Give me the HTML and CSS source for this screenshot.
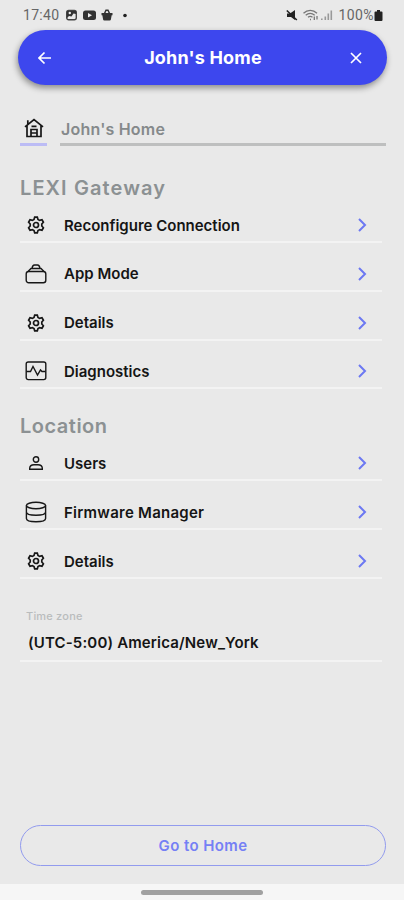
FILE: index.html
```html
<!DOCTYPE html>
<html lang="en">
<head>
    <meta charset="UTF-8">
    <meta name="viewport" content="width=device-width, initial-scale=1">
    <title>John's Home</title>
    <link rel="stylesheet" href="styles.css">
</head>
<body>
    <!-- shared icons -->
    <svg class="defs" width="0" height="0">
        <symbol id="gear" viewBox="0 0 18 18">
            <path d="M7.700 1.200h2.600l.7 2.300 1.600.9 2.400-.6 1.400 2.400L14.800 8v2l1.600 1.800-1.400 2.400-2.400-.6-1.600.9-.7 2.300H7.700L7 14.500l-1.600-.9-2.400.6-1.400-2.400L3.200 10V8L1.600 6.200 3 3.800l2.400.6L7 3.500z"/>
            <circle cx="9" cy="9" r="2.500"/>
        </symbol>
        <symbol id="chevron" viewBox="0 0 10 14">
            <path d="M2 1l6 6-6 6"/>
        </symbol>
    </svg>

    <div class="screen">
        <div class="status-bar">
            <span class="clock">17:40</span>
            <svg class="status-left" width="64" height="14" viewBox="0 0 64 14">
                <rect x="1.700" y="2.500" width="9.600" height="9.300" rx="2" fill="none" stroke="#444" stroke-width="1.400"/>
                <path d="M2 3h9v3L8.500 5.500l-2 3L4 8 2 10z" fill="#333"/>
                <circle cx="4.800" cy="5" r="1.200" fill="#eee"/>
                <rect x="18" y="2.500" width="13" height="9.500" rx="2.500" fill="#333"/>
                <path d="M23 5v4.500l4-2.250z" fill="#eee"/>
                <path d="M36.500 5h11v2.200h-11zM37.300 7h9.400l-.8 4.500q-.2 1-1.200 1h-5.400q-1 0-1.200-1z" fill="#333"/>
                <path d="M39.500 5.500L41 2.300h2l1.500 3.200" fill="none" stroke="#333" stroke-width="1.500"/>
                <circle cx="60" cy="7.500" r="1.800" fill="#222"/>
            </svg>
            <svg class="status-right" width="50" height="14" viewBox="0 0 50 14">
                <path d="M1 5.500h3L9 2v10L5 9H1z" fill="#222"/>
                <path d="M.8 2.500l10 9.500" stroke="#222" stroke-width="1.600"/>
                <g fill="none" stroke="#777" stroke-width="1.300">
                    <path d="M17.500 5.300c4-4 9.500-4 13.500 0M19.700 7.300c3-2.600 6-2.600 9 0M22 9.300c1.500-1.200 3-1.200 4.500 0M24 11.500h1"/>
                    <path d="M28.300 8.500v3.500M31 8v3.500"/>
                </g>
                <path d="M35 10.500h1.600V12H35zM38.500 8.500h1.600V12h-1.600zM41.500 5.500h1.600V12h-1.600zM44.500 2.500h1.600V12h-1.600z" fill="#999"/>
            </svg>
            <span class="percent">100%</span>
            <svg class="battery" width="9" height="13" viewBox="0 0 9 13">
                <path d="M3 1h3v1.500h1.500q1 0 1 1V11q0 1-1 1h-6q-1 0-1-1V3.500q0-1 1-1H3z" fill="#222"/>
            </svg>
        </div>

        <header class="header">
            <svg class="header-icon" width="14" height="14" viewBox="0 0 14 14"><path d="M13 7H1.500M6.500 1.500L1 7l5.500 5.500"/></svg>
            <h1>John's Home</h1>
            <svg class="header-icon" width="14" height="14" viewBox="0 0 14 14"><path d="M2 2l10 10M12 2L2 12"/></svg>
        </header>

        <div class="name-row">
            <div class="name-icon">
                <svg class="icon" width="20" height="20" viewBox="0 0 20 20">
                    <path d="M1 8.800L10 1.500l9 7.300M3 7.500V18.500h14V7.500M3.800 6V2.200M7 18v-6.500h6V18M7 15h6M7.500 8.300h5"/>
                </svg>
            </div>
            <div class="name-field">John's Home</div>
        </div>

        <h2 class="gateway">LEXI Gateway</h2>
        <ul class="menu">
            <li>
                <svg class="icon" width="18" height="18"><use href="#gear"/></svg>
                <span class="label">Reconfigure Connection</span>
                <svg class="chevron" width="10" height="14"><use href="#chevron"/></svg>
            </li>
            <li>
                <svg class="icon thin" width="22" height="22" viewBox="0 0 22 22">
                    <rect x="1.200" y="8.500" width="19.600" height="11.300" rx="2.500"/>
                    <path d="M3 8.500L6 5.500h10l3 3M7 5.500Q7.500 2 9.500 2h3Q14.500 2 15 5.500"/>
                </svg>
                <span class="label">App Mode</span>
                <svg class="chevron" width="10" height="14"><use href="#chevron"/></svg>
            </li>
            <li>
                <svg class="icon" width="18" height="18"><use href="#gear"/></svg>
                <span class="label">Details</span>
                <svg class="chevron" width="10" height="14"><use href="#chevron"/></svg>
            </li>
            <li>
                <svg class="icon thin" width="22" height="22" viewBox="0 0 22 22">
                    <rect x="1.200" y="2" width="19.600" height="17.600" rx="2"/>
                    <path d="M1.500 11.500h4L8 6.500l4.500 8.500 3-5 1.500 1.500h3.500"/>
                </svg>
                <span class="label">Diagnostics</span>
                <svg class="chevron" width="10" height="14"><use href="#chevron"/></svg>
            </li>
        </ul>

        <h2 class="location">Location</h2>
        <ul class="menu">
            <li>
                <svg class="icon thin" width="16" height="16" viewBox="0 0 16 16">
                    <circle cx="8" cy="4.500" r="2.700"/>
                    <path d="M1.700 14.200v-1.200Q2 9.800 6 9.800h4q4 0 4.300 3.200v1.200z"/>
                </svg>
                <span class="label">Users</span>
                <svg class="chevron" width="10" height="14"><use href="#chevron"/></svg>
            </li>
            <li>
                <svg class="icon thin" width="22" height="22" viewBox="0 0 22 22">
                    <ellipse cx="11" cy="4.500" rx="9.600" ry="3.200"/>
                    <path d="M1.400 4.500v13c0 4.300 19.200 4.300 19.200 0v-13M1.400 11c0 4.300 19.200 4.300 19.200 0"/>
                </svg>
                <span class="label firmware">Firmware Manager</span>
                <svg class="chevron" width="10" height="14"><use href="#chevron"/></svg>
            </li>
            <li>
                <svg class="icon" width="18" height="18"><use href="#gear"/></svg>
                <span class="label">Details</span>
                <svg class="chevron" width="10" height="14"><use href="#chevron"/></svg>
            </li>
        </ul>

        <div class="timezone">
            <div class="timezone-label">Time zone</div>
            <div class="timezone-value">(UTC-5:00) America/New_York</div>
        </div>

        <button class="home-button">Go to Home</button>

        <div class="nav-bar"><div class="nav-handle"></div></div>
    </div>
</body>
</html>
```
FILE: styles.css
```css
* {
    box-sizing: border-box;
}
body {
    margin: 0;
    background: #e9e9e9;
    font-family: Inter, "Open Sans", sans-serif;
}
.defs {
    display: block;
}
.screen {
    width: 404px;
    height: 900px;
    display: flex;
    flex-direction: column;
    overflow: hidden;
}
.status-bar {
    height: 30px;
    display: flex;
    align-items: center;
    padding: 0 21px 0 23px;
    font-family: Roboto, sans-serif;
    font-size: 14px;
    color: #666;
}
.clock {
    width: 42px;
    letter-spacing: 0.3px;
}
.status-right {
    margin-left: auto;
    margin-right: 3px;
}
.percent {
    letter-spacing: 0.4px;
}
.header {
    flex: none;
    height: 55px;
    margin: 0 17px 0 18px;
    padding: 0 24px 0 20px;
    display: flex;
    align-items: center;
    justify-content: space-between;
    background: #3d47ee;
    border-radius: 28px;
    box-shadow: -1px 3px 6px rgba(0,0,0,0.4);
    color: #fff;
}
.header-icon {
    fill: none;
    stroke: #fff;
    stroke-width: 1.7;
}
h1, h2 {
    margin: 0;
}
h1 {
    padding-left: 5px;
    font-size: 18px;
    line-height: 24px;
    font-weight: 700;
    letter-spacing: 0.2px;
}
.name-row {
    flex: none;
    display: flex;
    gap: 13px;
    height: 61px;
    padding: 0 18px 0 20px;
}
.name-icon {
    width: 27px;
    display: flex;
    align-items: flex-end;
    justify-content: center;
    padding-bottom: 5px;
    border-bottom: 3px solid #bcbcf5;
}
.name-field {
    flex: 1;
    padding-top: 34px;
    padding-left: 1px;
    border-bottom: 3px solid #bebfbf;
    color: #85898b;
    font-size: 16px;
    line-height: 20px;
    font-weight: 600;
    letter-spacing: 0.2px;
}
h2 {
    height: 30px;
    margin: 27px 0 0 20px;
    line-height: 30px;
    color: #8c9193;
    font-size: 20px;
    font-weight: 600;
    letter-spacing: 0.5px;
}
.gateway {
    letter-spacing: 1.1px;
}
.location {
    margin-top: 22px;
}
.icon {
    fill: none;
    stroke: #171717;
    stroke-width: 1.7;
}
.thin {
    stroke-width: 1.4;
}
.menu {
    margin: 0 22px 0 20px;
    padding: 0;
    list-style: none;
}
.menu li {
    display: grid;
    grid-template-columns: 32px 1fr 10px;
    gap: 12px;
    align-items: center;
    height: 48.800px;
    padding: 15px 15px 0 0;
    border-bottom: 2px solid #f3f3f3;
}
.menu li:first-child {
    height: 40px;
    padding-top: 6px;
}
.menu .icon {
    justify-self: center;
}
.label {
    font-size: 15px;
    font-weight: 600;
    color: #151515;
}
.firmware {
    letter-spacing: 0.25px;
}
.chevron {
    fill: none;
    stroke: #6c78f2;
    stroke-width: 2;
}
.timezone {
    margin: 29px 22px 0 20px;
    height: 54px;
    border-bottom: 2px solid #f3f3f3;
}
.timezone-label {
    padding-left: 6px;
    color: #b9bcbd;
    font-size: 11px;
    line-height: 16px;
    font-weight: 500;
    letter-spacing: 0.2px;
}
.timezone-value {
    margin-top: 9px;
    padding-left: 8px;
    color: #151515;
    font-size: 15px;
    line-height: 20px;
    font-weight: 600;
    letter-spacing: 0.15px;
}
.home-button {
    flex: none;
    height: 41px;
    margin: auto 18px 18px 20px;
    background: none;
    border: 1px solid #929bee;
    border-radius: 21px;
    color: #7580f5;
    font-family: inherit;
    font-size: 15px;
    font-weight: 600;
    letter-spacing: 0.4px;
}
.nav-bar {
    flex: none;
    height: 16px;
    padding-top: 6px;
    background: #f6f6f6;
}
.nav-handle {
    width: 122px;
    height: 5px;
    margin: 0 auto;
    background: #a1a1a1;
    border-radius: 3px;
}
```
